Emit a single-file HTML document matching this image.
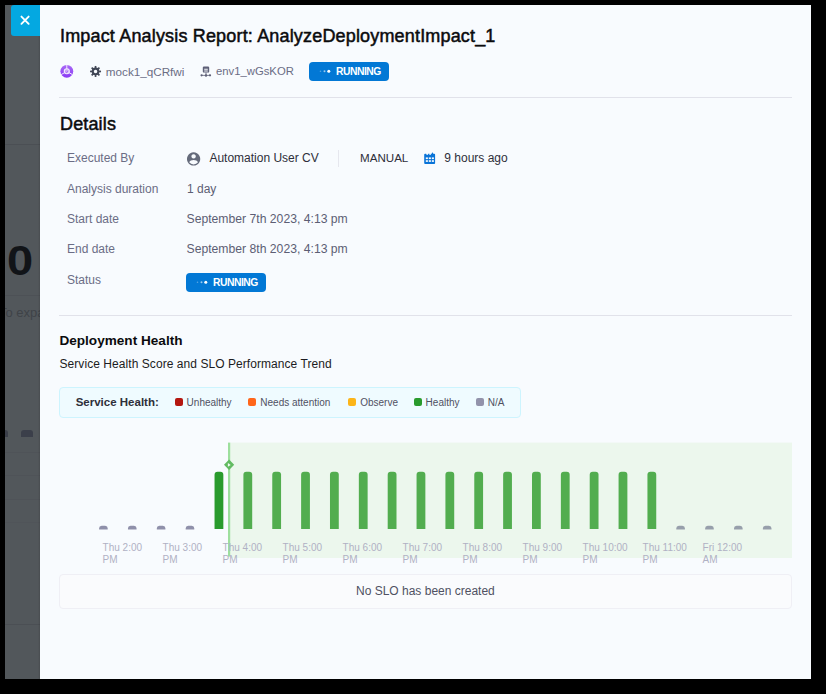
<!DOCTYPE html>
<html><head><meta charset="utf-8">
<style>
*{margin:0;padding:0;box-sizing:border-box}
html,body{width:826px;height:694px;overflow:hidden;background:#000;font-family:"Liberation Sans",sans-serif}
#overlay{position:absolute;left:5px;top:5px;width:35px;height:674px;background:#52575b;overflow:hidden}
#drawer{position:absolute;left:40px;top:5px;width:771px;height:674px;background:#f8fbfe}
#close{position:absolute;left:11px;top:5px;width:29px;height:31px;background:#04a8e1;border-radius:3px 0 0 3px}
.t{position:absolute;white-space:nowrap;line-height:1}
.badge{position:absolute;width:80px;height:19px;background:#0278d5;border-radius:4px}
.sep{position:absolute;height:1px;background:#e1e2ea}
.leg{position:absolute;width:8px;height:8px;border-radius:2px}
svg{position:absolute;left:0;top:0;overflow:visible}
</style></head>
<body>
<div id="overlay">
<div style="position:absolute;left:0;top:0;width:35px;height:139px;background:#53585c"></div>
<div style="position:absolute;left:0;top:139px;width:35px;height:1px;background:#4b4f54"></div>
<div class="t" style="left:2px;top:235px;font-size:42px;color:#111418;font-weight:bold;transform:scaleX(1.12);transform-origin:0 0">0</div>
<div style="position:absolute;left:0;top:290px;width:35px;height:1px;background:#4d5156"></div>
<div class="t" style="left:-6px;top:301px;font-size:13px;color:#3f4348">To expand</div>
<div style="position:absolute;left:-3px;top:425.3px;width:6.3px;height:6.6px;border-radius:3px 3px 0 0;background:#3b3f4a"></div>
<div style="position:absolute;left:16.1px;top:425.3px;width:11.8px;height:6.6px;border-radius:3px 3px 0 0;background:#3b3f4a"></div>
<div style="position:absolute;left:0;top:446.9px;width:35px;height:1px;background:#4f5358"></div>
<div style="position:absolute;left:0;top:470.3px;width:35px;height:1px;background:#4f5358"></div>
<div style="position:absolute;left:0;top:493.6px;width:35px;height:1px;background:#4f5358"></div>
<div style="position:absolute;left:0;top:517.4px;width:35px;height:1px;background:#505459"></div>
<div style="position:absolute;left:0;top:619.4px;width:35px;height:1px;background:#4b4f54"></div>
<div style="position:absolute;left:33px;top:0;width:2px;height:674px;background:linear-gradient(90deg,rgba(0,0,0,0),rgba(0,0,0,0.12))"></div>
</div>
<div id="drawer"></div>
<div id="close"><svg width="29" height="31"><path d="M10.45 11.6 L17.65 18.8 M17.65 11.6 L10.45 18.8" stroke="#fff" stroke-width="1.9" stroke-linecap="round"/></svg></div>
<div class="t" style="left:60px;top:26.56px;font-size:18px;color:#0b0b0d;letter-spacing:0.17px;-webkit-text-stroke:0.5px #0b0b0d;">Impact Analysis Report: AnalyzeDeploymentImpact_1</div>
<svg width="826" height="694">
<defs><linearGradient id="pg" x1="0" y1="0" x2="0" y2="1"><stop offset="0" stop-color="#a96af6"/><stop offset="1" stop-color="#8a3af5"/></linearGradient></defs>
<circle cx="66.8" cy="71.3" r="6.4" fill="url(#pg)"/>
<path d="M66.8 64.9 V69 M64.8 72.5 L61.2 74.6 M68.8 72.5 L72.4 74.6" stroke="#f3ebfe" stroke-width="1"/>
<circle cx="66.8" cy="71.3" r="2.5" fill="#c9a6f7" stroke="#f3ebfe" stroke-width="1.1"/><path d="M65.6 71.9 l0.9 0.7 l1.6 -1.8" stroke="#9a5ef0" stroke-width="0.7" fill="none"/>
</svg>
<svg width="826" height="694"><g transform="translate(95.55 71.45)" stroke="#414756" fill="none">
<circle r="2.8" stroke-width="2.1"/>
<g stroke-width="1.7"><line x1="3.00" y1="0.00" x2="5.50" y2="0.00"/><line x1="2.12" y1="2.12" x2="3.89" y2="3.89"/><line x1="0.00" y1="3.00" x2="0.00" y2="5.50"/><line x1="-2.12" y1="2.12" x2="-3.89" y2="3.89"/><line x1="-3.00" y1="0.00" x2="-5.50" y2="0.00"/><line x1="-2.12" y1="-2.12" x2="-3.89" y2="-3.89"/><line x1="-0.00" y1="-3.00" x2="-0.00" y2="-5.50"/><line x1="2.12" y1="-2.12" x2="3.89" y2="-3.89"/></g>
</g></svg>
<div class="t" style="left:105.8px;top:65.60px;font-size:11.7px;color:#6b6d85;">mock1_qCRfwi</div>
<svg width="826" height="694"><g fill="#5f6178">
<path d="M204 66.4 h4 a1.2 1.2 0 0 1 1.2 1.2 v3.8 a1.2 1.2 0 0 1 -1.2 1.2 h-4 a1.2 1.2 0 0 1 -1.2 -1.2 v-3.8 a1.2 1.2 0 0 1 1.2 -1.2 Z M204.2 68.8 h3.6 v0.9 h-3.6 Z M204.2 70.6 h3.6 v0.9 h-3.6 Z" fill-rule="evenodd"/>
<rect x="205.55" y="72.5" width="0.9" height="2.6"/>
<rect x="201.5" y="74.9" width="8.6" height="0.8"/>
<circle cx="201.6" cy="75.3" r="1.15"/><circle cx="206" cy="75.5" r="1.2"/><circle cx="210" cy="75.3" r="1.15"/>
</g></svg>
<div class="t" style="left:216px;top:65.93px;font-size:11.3px;color:#6b6d85;">env1_wGsKOR</div>
<div class="badge" style="left:309px;top:62px"><svg width="79" height="19"><circle cx="11.5" cy="9.3" r="0.8" fill="#fff" fill-opacity="0.35"/><circle cx="15.5" cy="9.3" r="1" fill="#fff" fill-opacity="0.6"/><circle cx="19.8" cy="9.3" r="1.5" fill="#fff"/></svg><div class="t" style="left:27px;top:5.08px;font-size:10.3px;letter-spacing:-0.45px;color:#fff;font-weight:bold">RUNNING</div></div>
<div class="sep" style="left:59px;top:96.5px;width:733px;height:1.5px"></div>
<div class="t" style="left:60px;top:114.76px;font-size:18px;color:#0b0b0d;letter-spacing:0.15px;-webkit-text-stroke:0.5px #0b0b0d;">Details</div>
<div class="t" style="left:67px;top:151.84px;font-size:12px;color:#6b6d85;">Executed By</div>
<div class="t" style="left:67px;top:182.74px;font-size:12px;color:#6b6d85;">Analysis duration</div>
<div class="t" style="left:67px;top:213.04px;font-size:12px;color:#6b6d85;">Start date</div>
<div class="t" style="left:67px;top:243.24px;font-size:12px;color:#6b6d85;">End date</div>
<div class="t" style="left:67px;top:273.74px;font-size:12px;color:#6b6d85;">Status</div>
<svg width="826" height="694"><g fill="#656b7b">
<path d="M193.6 152.3 a6.65 6.65 0 1 0 0.001 0 Z M193.6 154.2 a2.2 2.2 0 1 1 -0.001 0 Z M189.2 162.3 a5.6 5.6 0 0 0 8.8 0 c-0.7 -1.6 -2.4 -2.4 -4.4 -2.4 c-2 0 -3.7 0.8 -4.4 2.4 Z" fill-rule="evenodd"/>
</g></svg>
<div class="t" style="left:209.4px;top:151.84px;font-size:12px;color:#2e2f3a;">Automation User CV</div>
<div style="position:absolute;left:337.5px;top:150px;width:1px;height:17px;background:#e6e7ee"></div>
<div class="t" style="left:360px;top:152.18px;font-size:11.6px;color:#2e2f3a;">MANUAL</div>
<svg width="826" height="694"><g fill="#0a74d8">
<path d="M425.2 153.8 h8.9 a1 1 0 0 1 1 1 v8.2 a1 1 0 0 1 -1 1 h-8.9 a1 1 0 0 1 -1 -1 v-8.2 a1 1 0 0 1 1 -1 Z"/>
<rect x="431.9" y="152.4" width="1.2" height="2.6" rx="0.6"/>
</g><g fill="#f8fbfe">
<circle cx="427.2" cy="153.8" r="1.1"/><circle cx="430.1" cy="154" r="0.9"/>
<rect x="425.8" y="157.4" width="2.1" height="1.7"/><rect x="428.8" y="157.4" width="2.1" height="1.7"/><rect x="431.8" y="157.4" width="2.1" height="1.7"/>
<rect x="425.8" y="160.2" width="2.1" height="1.7"/><rect x="428.8" y="160.2" width="2.1" height="1.7"/><rect x="431.8" y="160.2" width="2.1" height="1.7"/>
</g></svg>
<div class="t" style="left:444.3px;top:151.84px;font-size:12px;color:#2e2f3a;">9 hours ago</div>
<div class="t" style="left:187px;top:182.74px;font-size:12px;color:#5c5e74;">1 day</div>
<div class="t" style="left:186.5px;top:212.87px;font-size:12.2px;color:#5c5e74;">September 7th 2023, 4:13 pm</div>
<div class="t" style="left:186.5px;top:243.07px;font-size:12.2px;color:#5c5e74;">September 8th 2023, 4:13 pm</div>
<div class="badge" style="left:186px;top:272.5px"><svg width="79" height="19"><circle cx="11.5" cy="9.3" r="0.8" fill="#fff" fill-opacity="0.35"/><circle cx="15.5" cy="9.3" r="1" fill="#fff" fill-opacity="0.6"/><circle cx="19.8" cy="9.3" r="1.5" fill="#fff"/></svg><div class="t" style="left:27px;top:5.08px;font-size:10.3px;letter-spacing:-0.45px;color:#fff;font-weight:bold">RUNNING</div></div>
<div class="sep" style="left:59px;top:314.5px;width:733px;height:1.5px"></div>
<div class="t" style="left:59.4px;top:333.89px;font-size:13.6px;color:#0b0b0d;font-weight:bold;">Deployment Health</div>
<div class="t" style="left:59.5px;top:357.84px;font-size:12px;color:#1c1c22;letter-spacing:0.06px;">Service Health Score and SLO Performance Trend</div>
<div style="position:absolute;left:59px;top:387px;width:462px;height:30.5px;background:#effbff;border:1px solid #cdf4fe;border-radius:4px"></div>
<div class="t" style="left:75.7px;top:396.87px;font-size:11.5px;color:#2e2f3a;font-weight:bold;">Service Health:</div>
<div class="leg" style="left:175px;top:398px;background:#b41710"></div>
<div class="t" style="left:186.6px;top:397.64px;font-size:10px;color:#4f5162;">Unhealthy</div>
<div class="leg" style="left:248.4px;top:398px;background:#ff661a"></div>
<div class="t" style="left:260.3px;top:397.64px;font-size:10px;color:#4f5162;">Needs attention</div>
<div class="leg" style="left:348px;top:398px;background:#fcb519"></div>
<div class="t" style="left:360.2px;top:397.64px;font-size:10px;color:#4f5162;">Observe</div>
<div class="leg" style="left:413.6px;top:398px;background:#299b2d"></div>
<div class="t" style="left:425.6px;top:397.64px;font-size:10px;color:#4f5162;">Healthy</div>
<div class="leg" style="left:475.7px;top:398px;background:#9293ab"></div>
<div class="t" style="left:487.7px;top:397.64px;font-size:10px;color:#4f5162;">N/A</div>
<svg width="826" height="694">
<rect x="230" y="442.6" width="562" height="115.4" fill="#ecf7ed"/>
<path d="M99.10 529.6 V528.2 a3 2.5 0 0 1 2.6 -2.5 h3.4 a3 2.5 0 0 1 2.6 2.5 V529.6 Z" fill="#8f90aa"/>
<path d="M127.96 529.6 V528.2 a3 2.5 0 0 1 2.6 -2.5 h3.4 a3 2.5 0 0 1 2.6 2.5 V529.6 Z" fill="#8f90aa"/>
<path d="M156.82 529.6 V528.2 a3 2.5 0 0 1 2.6 -2.5 h3.4 a3 2.5 0 0 1 2.6 2.5 V529.6 Z" fill="#8f90aa"/>
<path d="M185.68 529.6 V528.2 a3 2.5 0 0 1 2.6 -2.5 h3.4 a3 2.5 0 0 1 2.6 2.5 V529.6 Z" fill="#8f90aa"/>
<path d="M214.54 529.1 V474.7 a3 3 0 0 1 3 -3 h2.8 a3 3 0 0 1 3 3 V529.1 Z" fill="#299b2d"/>
<path d="M243.40 529.1 V474.7 a3 3 0 0 1 3 -3 h2.8 a3 3 0 0 1 3 3 V529.1 Z" fill="#52ad4f"/>
<path d="M272.26 529.1 V474.7 a3 3 0 0 1 3 -3 h2.8 a3 3 0 0 1 3 3 V529.1 Z" fill="#52ad4f"/>
<path d="M301.12 529.1 V474.7 a3 3 0 0 1 3 -3 h2.8 a3 3 0 0 1 3 3 V529.1 Z" fill="#52ad4f"/>
<path d="M329.98 529.1 V474.7 a3 3 0 0 1 3 -3 h2.8 a3 3 0 0 1 3 3 V529.1 Z" fill="#52ad4f"/>
<path d="M358.84 529.1 V474.7 a3 3 0 0 1 3 -3 h2.8 a3 3 0 0 1 3 3 V529.1 Z" fill="#52ad4f"/>
<path d="M387.70 529.1 V474.7 a3 3 0 0 1 3 -3 h2.8 a3 3 0 0 1 3 3 V529.1 Z" fill="#52ad4f"/>
<path d="M416.56 529.1 V474.7 a3 3 0 0 1 3 -3 h2.8 a3 3 0 0 1 3 3 V529.1 Z" fill="#52ad4f"/>
<path d="M445.42 529.1 V474.7 a3 3 0 0 1 3 -3 h2.8 a3 3 0 0 1 3 3 V529.1 Z" fill="#52ad4f"/>
<path d="M474.28 529.1 V474.7 a3 3 0 0 1 3 -3 h2.8 a3 3 0 0 1 3 3 V529.1 Z" fill="#52ad4f"/>
<path d="M503.14 529.1 V474.7 a3 3 0 0 1 3 -3 h2.8 a3 3 0 0 1 3 3 V529.1 Z" fill="#52ad4f"/>
<path d="M532.00 529.1 V474.7 a3 3 0 0 1 3 -3 h2.8 a3 3 0 0 1 3 3 V529.1 Z" fill="#52ad4f"/>
<path d="M560.86 529.1 V474.7 a3 3 0 0 1 3 -3 h2.8 a3 3 0 0 1 3 3 V529.1 Z" fill="#52ad4f"/>
<path d="M589.72 529.1 V474.7 a3 3 0 0 1 3 -3 h2.8 a3 3 0 0 1 3 3 V529.1 Z" fill="#52ad4f"/>
<path d="M618.58 529.1 V474.7 a3 3 0 0 1 3 -3 h2.8 a3 3 0 0 1 3 3 V529.1 Z" fill="#52ad4f"/>
<path d="M647.44 529.1 V474.7 a3 3 0 0 1 3 -3 h2.8 a3 3 0 0 1 3 3 V529.1 Z" fill="#52ad4f"/>
<path d="M676.30 529.6 V528.2 a3 2.5 0 0 1 2.6 -2.5 h3.4 a3 2.5 0 0 1 2.6 2.5 V529.6 Z" fill="#979fab"/>
<path d="M705.16 529.6 V528.2 a3 2.5 0 0 1 2.6 -2.5 h3.4 a3 2.5 0 0 1 2.6 2.5 V529.6 Z" fill="#979fab"/>
<path d="M734.02 529.6 V528.2 a3 2.5 0 0 1 2.6 -2.5 h3.4 a3 2.5 0 0 1 2.6 2.5 V529.6 Z" fill="#979fab"/>
<path d="M762.88 529.6 V528.2 a3 2.5 0 0 1 2.6 -2.5 h3.4 a3 2.5 0 0 1 2.6 2.5 V529.6 Z" fill="#979fab"/>
<rect x="228" y="442.6" width="2.2" height="114" fill="#9ddf9d"/>
<path d="M229.1 459.6 L234.2 464.8 L229.1 470 L224 464.8 Z" fill="#62bb62"/>
<path d="M227.9 463.1 L230.7 464.9 L227.9 466.7 Z" fill="#f4fbf4"/>
</svg>
<div class="t" style="left:102.6px;top:541.53px;font-size:10px;line-height:12px;color:#b0b1c4">Thu 2:00<br>PM</div>
<div class="t" style="left:162.6px;top:541.53px;font-size:10px;line-height:12px;color:#b0b1c4">Thu 3:00<br>PM</div>
<div class="t" style="left:222.6px;top:541.53px;font-size:10px;line-height:12px;color:#b0b1c4">Thu 4:00<br>PM</div>
<div class="t" style="left:282.6px;top:541.53px;font-size:10px;line-height:12px;color:#b0b1c4">Thu 5:00<br>PM</div>
<div class="t" style="left:342.6px;top:541.53px;font-size:10px;line-height:12px;color:#b0b1c4">Thu 6:00<br>PM</div>
<div class="t" style="left:402.6px;top:541.53px;font-size:10px;line-height:12px;color:#b0b1c4">Thu 7:00<br>PM</div>
<div class="t" style="left:462.6px;top:541.53px;font-size:10px;line-height:12px;color:#b0b1c4">Thu 8:00<br>PM</div>
<div class="t" style="left:522.6px;top:541.53px;font-size:10px;line-height:12px;color:#b0b1c4">Thu 9:00<br>PM</div>
<div class="t" style="left:582.6px;top:541.53px;font-size:10px;line-height:12px;color:#b0b1c4">Thu 10:00<br>PM</div>
<div class="t" style="left:642.6px;top:541.53px;font-size:10px;line-height:12px;color:#b0b1c4">Thu 11:00<br>PM</div>
<div class="t" style="left:702.6px;top:541.53px;font-size:10px;line-height:12px;color:#b0b1c4">Fri 12:00<br>AM</div>
<div style="position:absolute;left:59px;top:574px;width:733px;height:34.5px;background:#fafbfd;border:1px solid #efeff5;border-radius:4px"></div>
<div class="t" style="left:356px;top:585.04px;font-size:12px;color:#4f5162;">No SLO has been created</div>
</body></html>
